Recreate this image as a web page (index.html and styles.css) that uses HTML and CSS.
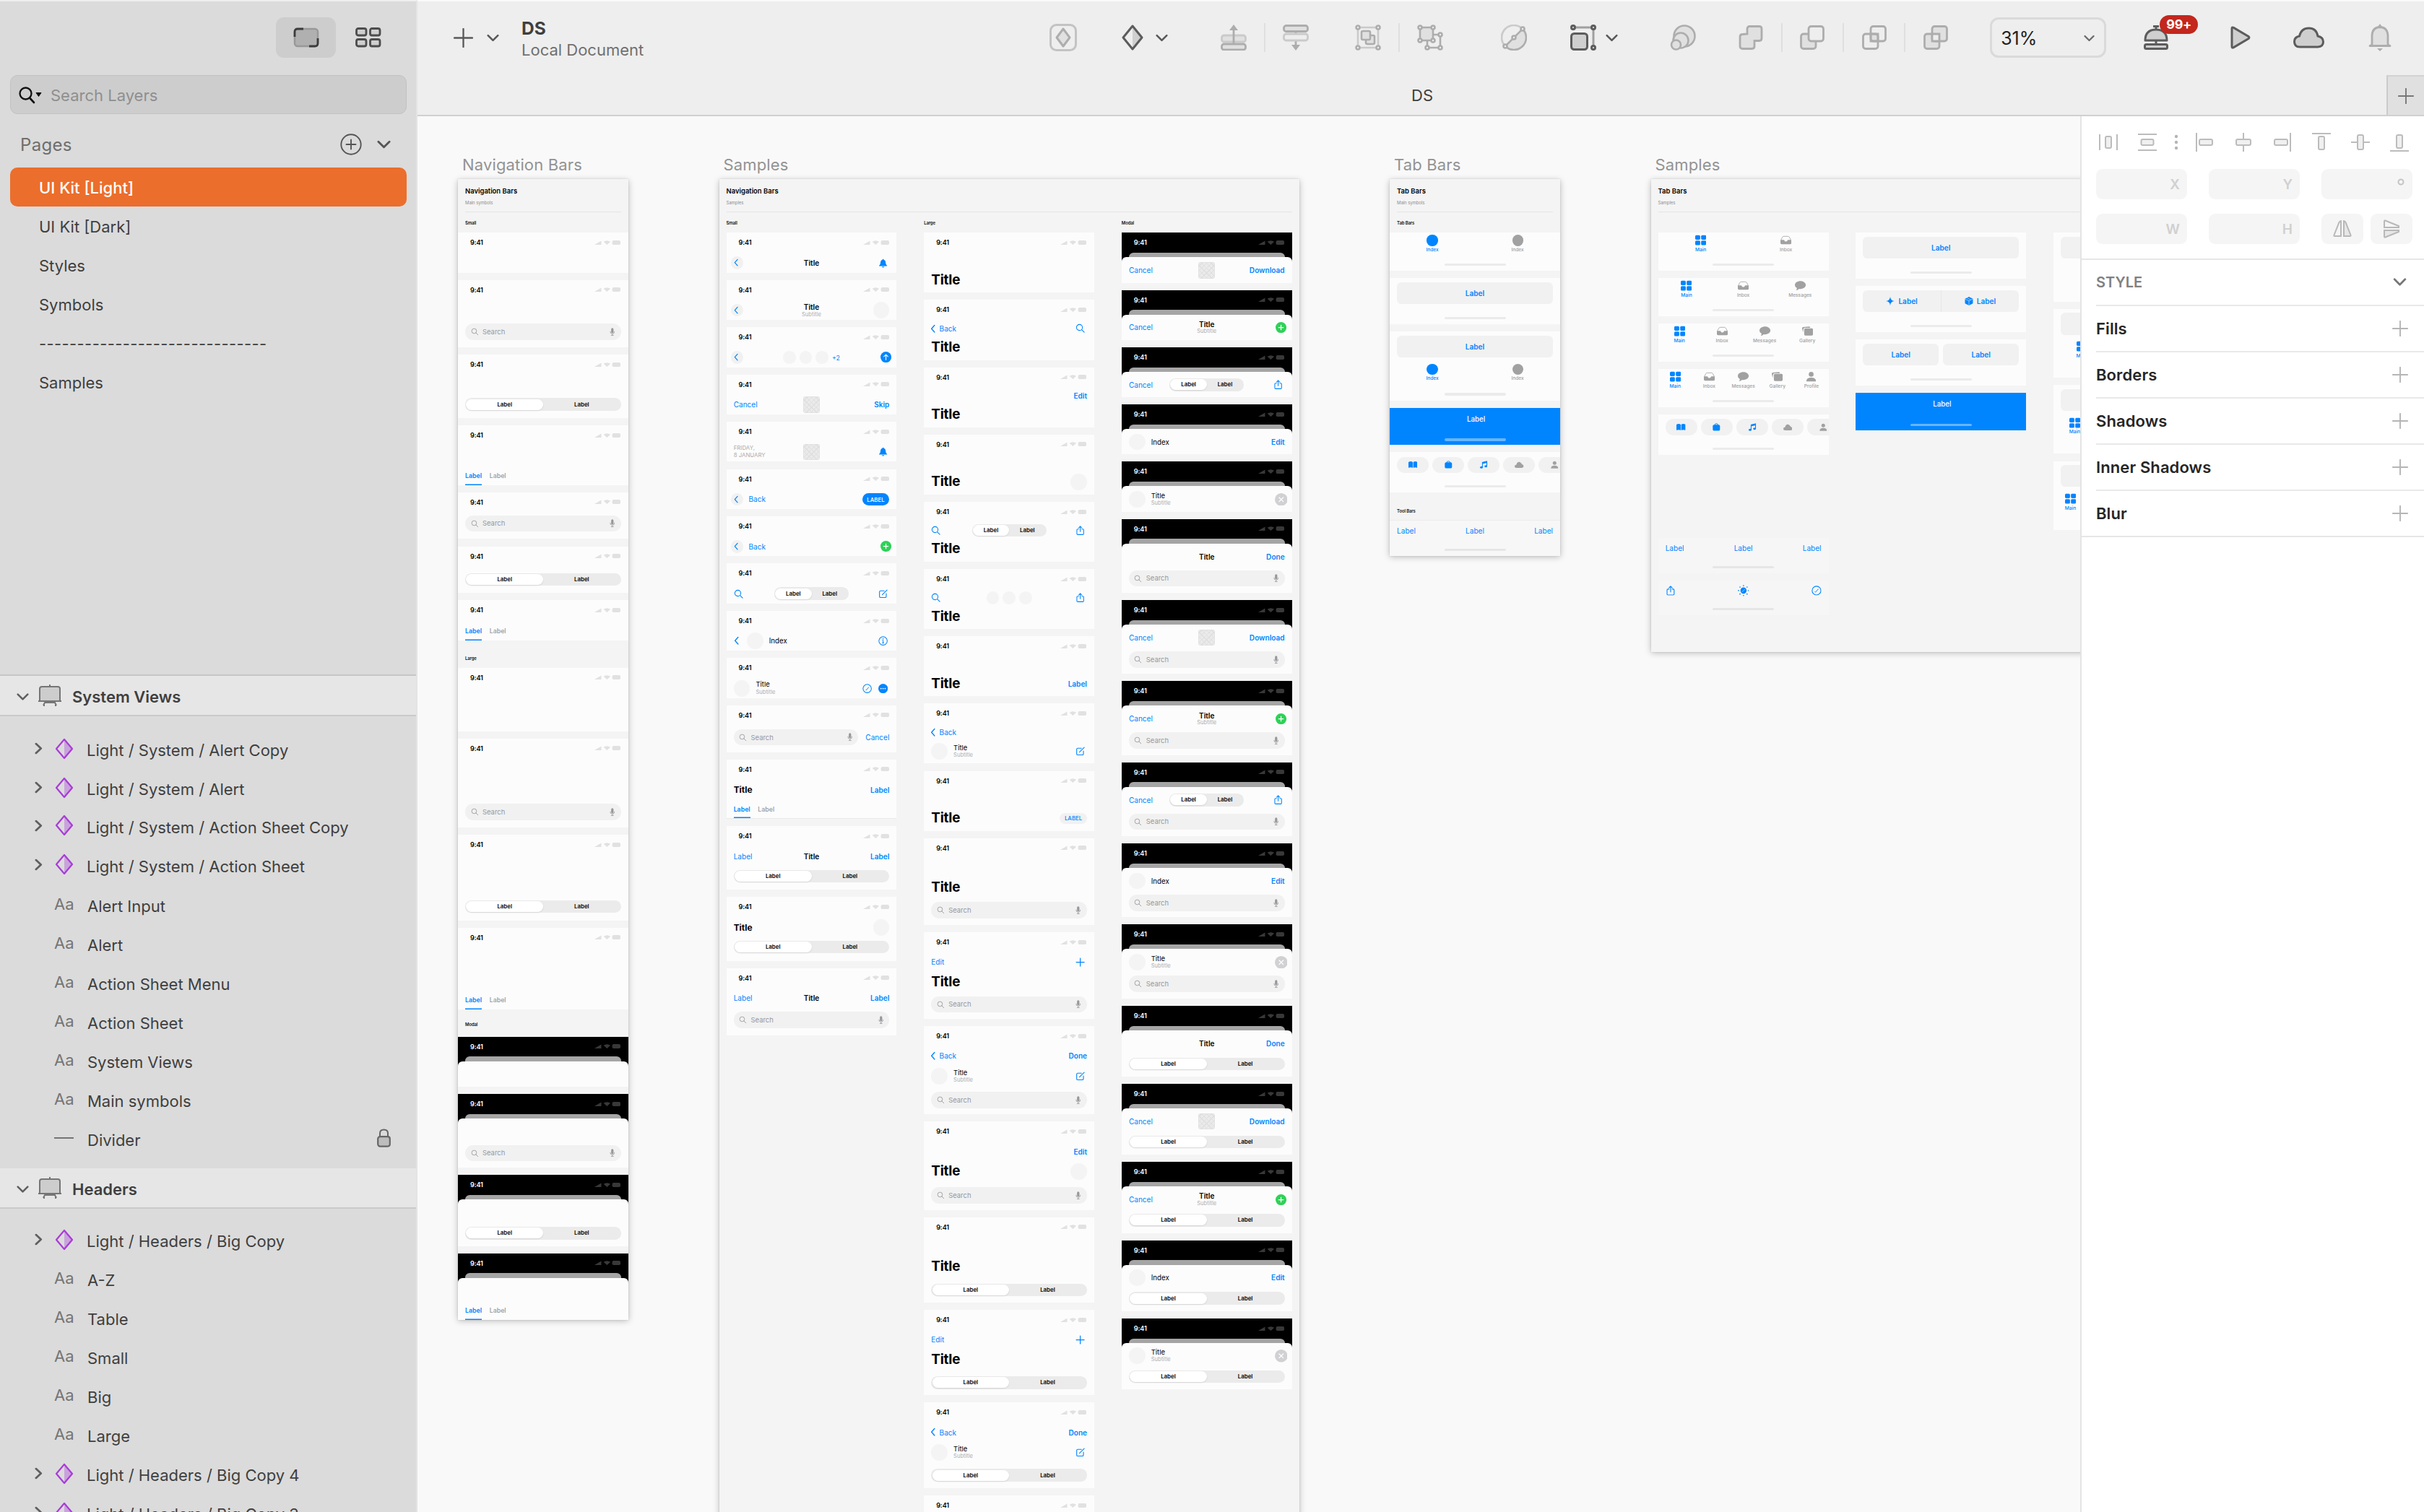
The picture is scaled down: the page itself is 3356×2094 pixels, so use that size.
FILE: index.html
```html
<!DOCTYPE html>
<html lang="en">
<head>
<meta charset="utf-8">
<title>DS</title>
<link rel="stylesheet" href="styles.css">
</head>
<body>
<svg class="defs" aria-hidden="true">
  <symbol id="chev" viewBox="0 0 20 12"><path d="M2 2l8 8 8-8" fill="none" stroke="currentColor" stroke-width="3" stroke-linecap="round" stroke-linejoin="round"/></symbol>
  <symbol id="chevr" viewBox="0 0 12 18"><path d="M2 2l7.500 7-7.500 7" fill="none" stroke="currentColor" stroke-width="3" stroke-linecap="round" stroke-linejoin="round"/></symbol>
  <symbol id="plusl" viewBox="0 0 28 28"><path d="M14 1v26M1 14h26" stroke="currentColor" stroke-width="2.400" stroke-linecap="round"/></symbol>
  <symbol id="sym" viewBox="0 0 26 30"><path d="M13 2l11 13-11 13z" fill="#c9a3dc"/><path d="M13 2l11 13-11 13L2 15z" fill="none" stroke="#a93bd8" stroke-width="2.200" stroke-linejoin="round"/></symbol>
  <symbol id="board" viewBox="0 0 34 30"><path d="M3 22V6q0-3 3-3h22q3 0 3 3v16z" fill="#cdcdcd"/><path d="M3 22V6q0-3 3-3h22q3 0 3 3v16M1 23h32M17 0v3M8 29l2-4h14l2 4M8 29h2M24 29h2" fill="none" stroke="#757575" stroke-width="2"/></symbol>
  <symbol id="back" viewBox="0 0 24 24"><path d="M15 3L7 12l8 9" fill="none" stroke="currentColor" stroke-width="2.600" stroke-linecap="round" stroke-linejoin="round"/></symbol>
  <symbol id="bell" viewBox="0 0 24 24"><path d="M12 1.500c1 0 1.600.7 1.700 1.500 3 .9 4.600 3.300 4.800 7 .2 4 1.200 5.800 3.500 7.500V19H2v-1.500C4.300 15.800 5.300 14 5.500 10c.2-3.700 1.800-6.100 4.800-7 .1-.8.700-1.500 1.700-1.500zM9 20.500h6c-.3 1.600-1.400 2.300-3 2.300s-2.700-.7-3-2.300z" fill="currentColor"/></symbol>
  <symbol id="up" viewBox="0 0 24 24"><circle cx="12" cy="12" r="12" fill="currentColor"/><path d="M12 18V6.500M7.500 11L12 6.500l4.500 4.500" fill="none" stroke="#fff" stroke-width="1.800" stroke-linecap="round" stroke-linejoin="round"/></symbol>
  <symbol id="addc" viewBox="0 0 24 24"><circle cx="12" cy="12" r="12" fill="#30d158"/><path d="M12 7v10M7 12h10" stroke="#fff" stroke-width="2" stroke-linecap="round"/></symbol>
  <symbol id="close" viewBox="0 0 28 28"><circle cx="14" cy="14" r="14" fill="#d1d1d4"/><path d="M9.500 9.500l9 9M18.500 9.500l-9 9" stroke="#fff" stroke-width="2" stroke-linecap="round"/></symbol>
  <symbol id="find" viewBox="0 0 24 24"><circle cx="10" cy="10" r="7.500" fill="none" stroke="currentColor" stroke-width="1.900"/><path d="M15.500 15.500L22 22" stroke="currentColor" stroke-width="2" stroke-linecap="round"/></symbol>
  <symbol id="edit" viewBox="0 0 24 24"><path d="M20 11v7q0 3-3 3H6q-3 0-3-3V7q0-3 3-3h9M22 2L10 14" fill="none" stroke="currentColor" stroke-width="2" stroke-linecap="round"/></symbol>
  <symbol id="info" viewBox="0 0 24 24"><circle cx="12" cy="12" r="10.500" fill="none" stroke="currentColor" stroke-width="1.900"/><path d="M10 10.500h2.200V17M9.500 17.200h5" fill="none" stroke="currentColor" stroke-width="1.800"/><circle cx="12" cy="7" r="1.500" fill="currentColor"/></symbol>
  <symbol id="okc" viewBox="0 0 24 24"><circle cx="12" cy="12" r="10.500" fill="none" stroke="currentColor" stroke-width="1.900"/><path d="M8 14.500l1.500 1.500 7-8" fill="none" stroke="currentColor" stroke-width="1.700"/></symbol>
  <symbol id="more" viewBox="0 0 24 24"><circle cx="12" cy="12" r="12" fill="currentColor"/><g fill="#fff"><circle cx="6.800" cy="12" r="1.700"/><circle cx="12" cy="12" r="1.700"/><circle cx="17.200" cy="12" r="1.700"/></g></symbol>
  <symbol id="share" viewBox="0 0 24 24"><path d="M8 8.500H5.500q-2 0-2 2V20.500q0 2 2 2h13q2 0 2-2V10.500q0-2-2-2H16M12 15V1.500M8 5.500l4-4 4 4" fill="none" stroke="currentColor" stroke-width="1.900" stroke-linecap="round" stroke-linejoin="round"/></symbol>
  <symbol id="add" viewBox="0 0 24 24"><path d="M12 2v20M2 12h20" stroke="currentColor" stroke-width="2.200" stroke-linecap="round"/></symbol>
  <symbol id="mic" viewBox="0 0 14 20"><rect x="4" y="0" width="6" height="13" rx="3" fill="currentColor"/><path d="M1.500 8.500q0 6.500 5.500 6.500t5.500-6.500M7 15v4M3.500 19h7" fill="none" stroke="currentColor" stroke-width="1.500"/></symbol>
  <symbol id="main" viewBox="0 0 24 24"><g fill="currentColor"><rect x="0" y="1" width="11" height="10" rx="2.500"/><rect x="13" y="1" width="11" height="10" rx="2.500"/><rect x="0" y="13" width="11" height="10" rx="2.500"/><rect x="13" y="13" width="11" height="10" rx="2.500"/></g></symbol>
  <symbol id="inbox" viewBox="0 0 26 22"><path d="M1 11L5 3.500Q6 2 8 2h10q2 0 3 1.500L25 11" fill="none" stroke="currentColor" stroke-width="1.400"/><path d="M0 10.500h8q1 0 1.400 1.500 1 2.500 3.600 2.500t3.600-2.500q.4-1.500 1.400-1.500h8V18q0 3-3 3H3q-3 0-3-3z" fill="currentColor"/></symbol>
  <symbol id="msg" viewBox="0 0 26 22"><path d="M13 0c7 0 13 4 13 9.500S20 19 13 19c-1 0-2-.1-3-.3Q7 22 3 22q2-2 1.700-5.300C1.700 15 0 12.500 0 9.500 0 4 6 0 13 0z" fill="currentColor"/></symbol>
  <symbol id="gal" viewBox="0 0 26 22"><path d="M2 14L0 4q0-2 2-2.500L17 0q2 0 2.500 3H7q-4 0-4 4z" fill="currentColor"/><rect x="5" y="4.500" width="21" height="17" rx="3" fill="currentColor"/></symbol>
  <symbol id="user" viewBox="0 0 24 24"><circle cx="12" cy="7" r="5.300" fill="currentColor"/><path d="M1.500 22q0-7.500 10.500-7.500T22.500 22q0 .8-1 .8h-19q-1 0-1-.8z" fill="currentColor"/></symbol>
  <symbol id="book" viewBox="0 0 24 18"><path d="M0 2q6-3.500 11.300 0v15Q6 14.500 0 17zM12.700 2Q18 -1.500 24 2v15q-6-2.500-11.300 0z" fill="currentColor"/></symbol>
  <symbol id="bag" viewBox="0 0 24 24"><rect x="1.500" y="5" width="21" height="17.500" rx="4" fill="currentColor"/><path d="M7 6q0-4.500 5-4.500T17 6" fill="none" stroke="currentColor" stroke-width="2"/></symbol>
  <symbol id="note" viewBox="0 0 24 24"><path d="M8 19V5l13-3v14" fill="none" stroke="currentColor" stroke-width="2.200"/><path d="M8 5l13-3v4.500L8 9.500z" fill="currentColor"/><ellipse cx="5" cy="19.500" rx="4" ry="3.300" fill="currentColor"/><ellipse cx="18" cy="16.500" rx="4" ry="3.300" fill="currentColor"/></symbol>
  <symbol id="cloud" viewBox="0 0 26 18"><path d="M6 18q-6 0-6-4.500Q0 9 5 8.500 6 2.500 11 1q5-1.500 8 4 2 .3 2.500 3 4.500.8 4.500 5t-5 5z" fill="currentColor"/></symbol>
  <symbol id="star" viewBox="0 0 24 24"><path d="M12 0q1 11 12 12-11 1-12 12-1-11-12-12Q11 11 12 0z" fill="currentColor"/></symbol>
  <symbol id="box" viewBox="0 0 24 24"><path d="M12 0l11 5.500v13L12 24 1 18.500v-13z" fill="currentColor"/><path d="M1 6l11 5.500L23 6M12 11.500V24M6.500 3.200l11 5.300" fill="none" stroke="#f1f1f1" stroke-width="1.200"/></symbol>
  <symbol id="sun" viewBox="0 0 24 24"><circle cx="12" cy="12" r="6.500" fill="currentColor"/><path d="M9 15l6-6" stroke="#f6f6f6" stroke-width="1"/><g fill="currentColor"><circle cx="12" cy="1.500" r="1.300"/><circle cx="12" cy="22.500" r="1.300"/><circle cx="1.500" cy="12" r="1.300"/><circle cx="22.500" cy="12" r="1.300"/><circle cx="4.600" cy="4.600" r="1.300"/><circle cx="19.400" cy="4.600" r="1.300"/><circle cx="4.600" cy="19.400" r="1.300"/><circle cx="19.400" cy="19.400" r="1.300"/></g></symbol>
</svg>

<div class="app">
<aside class="sidebar">
  <div class="modes">
    <button class="mode on"><svg width="36" height="28" viewBox="0 0 36 28"><rect x="2" y="2" width="32" height="24" rx="4" fill="#b0b0b0" stroke="#999" stroke-width="2.500"/><path d="M2 13V6q0-4 4-4h8M34 15v7q0 4-4 4h-8" fill="none" stroke="#3c3c3c" stroke-width="2.800"/></svg></button>
    <button class="mode"><svg width="36" height="28" viewBox="0 0 36 28"><g fill="#cfcfcf" stroke="#4c4c4c" stroke-width="2.800"><rect x="1.500" y="1.500" width="13.500" height="9.500" rx="2.500"/><rect x="20.500" y="1.500" width="13.500" height="9.500" rx="2.500"/><rect x="1.500" y="16.500" width="13.500" height="9.500" rx="2.500"/><rect x="20.500" y="16.500" width="13.500" height="9.500" rx="2.500"/></g></svg></button>
  </div>
  <div class="find"><svg width="32" height="24" viewBox="0 0 32 24"><circle cx="9.500" cy="9.500" r="8" fill="none" stroke="#111" stroke-width="2.300"/><path d="M15 15.500l6 6.500" stroke="#111" stroke-width="2.600" stroke-linecap="round"/><path d="M24 8.500h7l-3.500 5z" fill="#111" stroke="#111" stroke-linejoin="round"/></svg><span>Search Layers</span></div>
  <div class="pages-head"><span>Pages</span>
    <svg width="30" height="30" viewBox="0 0 30 30"><circle cx="15" cy="15" r="13.700" fill="none" stroke="#555" stroke-width="1.900"/><path d="M15 8.500v13M8.500 15h13" stroke="#555" stroke-width="1.900" stroke-linecap="round"/></svg>
    <svg class="pc" width="19" height="12"><use href="#chev"/></svg></div>
  <ul class="pages">
    <li class="on">UI Kit [Light]</li><li>UI Kit [Dark]</li><li>Styles</li><li>Symbols</li><li class="rule">------------------------------</li><li>Samples</li>
  </ul>
  <div class="layers">
    <h3><svg class="fold"><use href="#chev"/></svg><svg class="bi"><use href="#board"/></svg>System Views</h3>
    <ul class="first">
      <li><svg class="ex"><use href="#chevr"/></svg><svg class="sy"><use href="#sym"/></svg>Light / System / Alert Copy</li>
      <li><svg class="ex"><use href="#chevr"/></svg><svg class="sy"><use href="#sym"/></svg>Light / System / Alert</li>
      <li class="hi"><svg class="ex"><use href="#chevr"/></svg><svg class="sy"><use href="#sym"/></svg>Light / System / Action Sheet Copy</li>
      <li class="hi"><svg class="ex"><use href="#chevr"/></svg><svg class="sy"><use href="#sym"/></svg>Light / System / Action Sheet</li>
      <li><i>Aa</i>Alert Input</li>
      <li><i>Aa</i>Alert</li>
      <li><i>Aa</i>Action Sheet Menu</li>
      <li><i>Aa</i>Action Sheet</li>
      <li><i>Aa</i>System Views</li>
      <li><i>Aa</i>Main symbols</li>
      <li><i class="dash"></i>Divider<svg class="lock" viewBox="0 0 19 26"><rect x="1.200" y="11.200" width="16.600" height="13.400" rx="3" fill="#bdbdbd" stroke="#666" stroke-width="2.200"/><path d="M4 11V6.500q0-5 5.500-5T15 6.500V11" fill="none" stroke="#666" stroke-width="2"/></svg></li>
    </ul>
    <h3 class="second"><svg class="fold"><use href="#chev"/></svg><svg class="bi"><use href="#board"/></svg>Headers</h3>
    <ul>
      <li><svg class="ex"><use href="#chevr"/></svg><svg class="sy"><use href="#sym"/></svg>Light / Headers / Big Copy</li>
      <li><i>Aa</i>A-Z</li>
      <li><i>Aa</i>Table</li>
      <li><i>Aa</i>Small</li>
      <li><i>Aa</i>Big</li>
      <li><i>Aa</i>Large</li>
      <li><svg class="ex"><use href="#chevr"/></svg><svg class="sy"><use href="#sym"/></svg>Light / Headers / Big Copy 4</li>
      <li><svg class="ex"><use href="#chevr"/></svg><svg class="sy"><use href="#sym"/></svg>Light / Headers / Big Copy 3</li>
    </ul>
  </div>
</aside>

<main class="window">
<header class="toolbar">
  <div class="doc"><svg class="new"><use href="#plusl"/></svg><svg class="cv"><use href="#chev"/></svg><div><strong>DS</strong><span>Local Document</span></div></div>
  <div class="tools">
    <svg class="t38" viewBox="0 0 38 38"><rect x="1.500" y="1.500" width="35" height="35" rx="8" fill="none" stroke="#c3c3c3" stroke-width="3"/><path d="M19 7l9 12-9 12-9-12z" fill="#e0e0e0" stroke="#adadad" stroke-width="3" stroke-linejoin="round"/></svg>
    <div class="grp m62"><svg class="t30" viewBox="0 0 30 36"><path d="M15 2l13 16-13 16z" fill="#cfcfcf"/><path d="M15 2l13 16-13 16L2 18z" fill="none" stroke="#5c5c5c" stroke-width="3" stroke-linejoin="round"/></svg><svg class="cv"><use href="#chev"/></svg></div>
    <div class="pair m73"><svg class="t36" viewBox="0 0 36 36" fill="#e0e0e0" stroke-width="2.800"><rect x="1.500" y="15" width="33" height="9" rx="3" stroke="#cacaca"/><rect x="1.500" y="27" width="33" height="8" rx="3" stroke="#adadad"/><path d="M18 27V6" stroke="#adadad"/><path d="M18 0l6 8H12z" fill="#adadad"/></svg><hr><svg class="t36" viewBox="0 0 36 36" fill="#e0e0e0" stroke-width="2.800"><path d="M18 9v20" stroke="#adadad"/><rect x="1.500" y="1.500" width="33" height="8" rx="3" stroke="#adadad"/><rect x="1.500" y="13" width="33" height="9" rx="3" fill="#eee" stroke="#cacaca"/><path d="M18 36l6-8H12z" fill="#adadad"/></svg></div>
    <div class="pair m64"><svg class="t36" viewBox="0 0 36 36" fill="#e0e0e0" stroke="#adadad" stroke-width="2.600"><path d="M4 4h28v28H4z" fill="none" stroke="#cacaca"/><rect x="15" y="15" width="12" height="12" rx="2"/><rect x="9" y="9" width="12" height="12" rx="2"/><g fill="#eee"><circle cx="4" cy="4" r="2.500"/><circle cx="32" cy="4" r="2.500"/><circle cx="4" cy="32" r="2.500"/><circle cx="32" cy="32" r="2.500"/></g></svg><hr><svg class="t36" viewBox="0 0 36 36" fill="#e0e0e0" stroke="#adadad" stroke-width="2.600"><path d="M14 14h18v18H14z" fill="none"/><path d="M4 4h18v18H4z"/><g fill="#eee"><circle cx="4" cy="4" r="2.500"/><circle cx="22" cy="4" r="2.500"/><circle cx="4" cy="22" r="2.500"/><circle cx="22" cy="22" r="2.500"/><circle cx="32" cy="14" r="2.500"/><circle cx="14" cy="32" r="2.500"/><circle cx="32" cy="32" r="2.500"/></g></svg></div>
    <svg class="t36 m80" viewBox="0 0 36 36" fill="none" stroke="#adadad" stroke-width="2.600"><path d="M30 6A16.500 16.500 0 0 0 6 30" stroke="#cacaca"/><path d="M30 6A16.500 16.500 0 0 1 6 30z" fill="#e0e0e0"/><g fill="#eee"><circle cx="30" cy="6" r="2.500"/><circle cx="18" cy="18" r="2.500"/><circle cx="6" cy="30" r="2.500"/></g></svg>
    <div class="grp m60"><svg class="t36" viewBox="0 0 36 36" fill="#cfcfcf" stroke="#5c5c5c" stroke-width="3"><path d="M4 4h28v28" fill="none" stroke="#a0a0a0"/><rect x="1.500" y="12.500" width="22" height="22" rx="4"/><g fill="#eee"><circle cx="4" cy="4" r="2.500"/><circle cx="32" cy="4" r="2.500"/><circle cx="32" cy="32" r="2.500"/></g></svg><svg class="cv near"><use href="#chev"/></svg></div>
    <svg class="t36 m72" viewBox="0 0 36 36" fill="#e0e0e0" stroke="#adadad" stroke-width="2.600"><circle cx="20" cy="16" r="14.500"/><circle cx="15" cy="22" r="10.500"/><circle cx="8.500" cy="28" r="6.500"/></svg>
    <div class="quad m59"><svg class="t34" viewBox="0 0 34 34" fill="#e0e0e0" stroke="#adadad" stroke-width="2.800"><path d="M12 12V5q0-3.500 3.500-3.500h13q3.500 0 3.500 3.500v13q0 3.500-3.500 3.500H22V29q0 3.500-3.500 3.500h-13Q2 32.500 2 29V16q0-3.500 3.500-3.500z"/></svg><hr><svg class="t34" viewBox="0 0 34 34" fill="#e0e0e0" stroke="#adadad" stroke-width="2.800"><rect x="1.500" y="12" width="20.500" height="20.500" rx="3.500"/><rect x="12" y="1.500" width="20.500" height="20.500" rx="3.500" fill="#eee"/></svg><hr><svg class="t34" viewBox="0 0 34 34" fill="none" stroke="#adadad" stroke-width="2.800"><path d="M12 12h10v10H12z" fill="#e0e0e0"/><rect x="1.500" y="12" width="20.500" height="20.500" rx="3.500"/><rect x="12" y="1.500" width="20.500" height="20.500" rx="3.500"/></svg><hr><svg class="t34" viewBox="0 0 34 34" fill="#e0e0e0" stroke="#adadad" stroke-width="2.800"><rect x="1.500" y="12" width="20.500" height="20.500" rx="3.500"/><rect x="12" y="1.500" width="20.500" height="20.500" rx="3.500"/><path d="M12 12h10v10H12z" fill="#eee"/></svg></div>
    <div class="zoom">31%<svg class="zc"><use href="#chev"/></svg></div>
    <div class="notify"><svg width="34" height="34" viewBox="0 0 34 34" fill="#cfcfcf" stroke="#5c5c5c" stroke-width="3"><path d="M2 21q0-15 15-15t15 15z" stroke-linejoin="round"/><rect x="1.500" y="26.500" width="31" height="6" rx="2"/><path d="M17 21v5M17 1v4M13 1.500h8" /></svg><b>99+</b></div>
    <svg class="m86" width="28" height="32" viewBox="0 0 28 32"><path d="M2 3.500Q2 1 4.500 2.400L25 14.500q1.800 1.500 0 3L4.500 29.600Q2 31 2 28.500z" fill="#cfcfcf" stroke="#5c5c5c" stroke-width="3"/></svg>
    <svg class="m59" width="43" height="30" viewBox="0 0 43 30"><path d="M9 28q-7.500 0-7.500-7.500 0-6 7-7.500Q11 2 21.500 2T34 13q7.500 1.500 7.500 8T34 28z" fill="#cfcfcf" stroke="#5c5c5c" stroke-width="3"/></svg>
    <svg class="m61" width="32" height="38" viewBox="0 0 32 38"><path d="M5 29V16Q5.500 5 16 4.500 26.500 5 27 16v13l3 1.500H2z" fill="#e0e0e0" stroke="#adadad" stroke-width="2.800" stroke-linejoin="round"/><path d="M12 34h8l-4 4zM13 4l3-4 3 4z" fill="#adadad"/></svg>
  </div>
</header>
<div class="tabs-row"><span>DS</span><button class="newtab"><svg width="22" height="22"><use href="#plusl"/></svg></button></div>

<div class="stage">
<div class="canvas">

<section class="board b1"><h2>Navigation Bars</h2>
<div class="art w375">
  <div class="ah"><strong>Navigation Bars</strong><small>Main symbols</small></div>
  <h4>Small</h4>
  <div class="col">
    <div class="card"><p class="st">9:41</p></div>
    <div class="card h148"><p class="st">9:41</p><div class="search"><svg><use href="#find"/></svg>Search<svg class="mic"><use href="#mic"/></svg></div></div>
    <div class="card h140"><p class="st">9:41</p><div class="seg"><b>Label</b><b>Label</b></div></div>
    <div class="card h131"><p class="st">9:41</p><div class="tabs"><b>Label</b><span>Label</span></div></div>
    <div class="card h103"><p class="st">9:41</p><div class="search"><svg><use href="#find"/></svg>Search<svg class="mic"><use href="#mic"/></svg></div></div>
    <div class="card h103"><p class="st">9:41</p><div class="seg"><b>Label</b><b>Label</b></div></div>
    <div class="card"><p class="st">9:41</p><div class="tabs"><b>Label</b><span>Label</span></div></div>
  </div>
  <h4 class="large">Large</h4>
  <div class="col">
    <div class="card h140"><p class="st">9:41</p></div>
    <div class="card h196"><p class="st">9:41</p><div class="search"><svg><use href="#find"/></svg>Search<svg class="mic"><use href="#mic"/></svg></div></div>
    <div class="card h188"><p class="st">9:41</p><div class="seg"><b>Label</b><b>Label</b></div></div>
    <div class="card h180"><p class="st">9:41</p><div class="tabs"><b>Label</b><span>Label</span></div></div>
  </div>
  <h4 class="modal-h">Modal</h4>
  <div class="col">
    <div class="card modal"><p class="st">9:41</p><div class="sheet"></div></div>
    <div class="card modal h162"><p class="st">9:41</p><div class="sheet"><div class="search"><svg><use href="#find"/></svg>Search<svg class="mic"><use href="#mic"/></svg></div></div></div>
    <div class="card modal h156"><p class="st">9:41</p><div class="sheet"><div class="seg"><b>Label</b><b>Label</b></div></div></div>
    <div class="card modal h147"><p class="st">9:41</p><div class="sheet"><div class="tabs"><b>Label</b><span>Label</span></div></div></div>
  </div>
</div></section>

<section class="board b2"><h2>Samples</h2>
<div class="art w1276">
  <div class="ah"><strong>Navigation Bars</strong><small>Samples</small></div>
  <div class="cols">
  <div class="stack"><h4>Small</h4><div class="col">
    <div class="card"><p class="st">9:41</p><div class="nav"><span class="l"><i class="bk"><svg><use href="#back"/></svg></i></span><b>Title</b><span class="r"><svg class="in"><use href="#bell"/></svg></span></div></div>
    <div class="card"><p class="st">9:41</p><div class="nav"><span class="l"><i class="bk"><svg><use href="#back"/></svg></i></span><div class="tt"><b>Title</b><small>Subtitle</small></div><span class="r"><i class="av"></i></span></div></div>
    <div class="card"><p class="st">9:41</p><div class="nav"><span class="l"><i class="bk"><svg><use href="#back"/></svg></i></span><div class="dots"><i></i><i></i><i></i><span>+2</span></div><span class="r"><svg class="big"><use href="#up"/></svg></span></div></div>
    <div class="card"><p class="st">9:41</p><div class="nav"><span class="l">Cancel</span><i class="pat"></i><span class="r"><b>Skip</b></span></div></div>
    <div class="card"><p class="st">9:41</p><div class="nav"><span class="l date">FRIDAY,<br>8 JANUARY</span><i class="pat"></i><span class="r"><svg class="in"><use href="#bell"/></svg></span></div></div>
    <div class="card"><p class="st">9:41</p><div class="nav"><span class="l"><i class="bk"><svg><use href="#back"/></svg></i>Back</span><span class="r"><em class="pill">LABEL</em></span></div></div>
    <div class="card"><p class="st">9:41</p><div class="nav"><span class="l"><i class="bk"><svg><use href="#back"/></svg></i>Back</span><span class="r"><svg class="big"><use href="#addc"/></svg></span></div></div>
    <div class="card"><p class="st">9:41</p><div class="nav"><span class="l"><svg><use href="#find"/></svg></span><div class="seg sm"><b>Label</b><b>Label</b></div><span class="r"><svg class="in"><use href="#edit"/></svg></span></div></div>
    <div class="card"><p class="st">9:41</p><div class="nav"><span class="l"><svg class="ch"><use href="#back"/></svg><i class="av"></i><span class="ix">Index</span></span><span class="r"><svg class="in"><use href="#info"/></svg></span></div></div>
    <div class="card"><p class="st">9:41</p><div class="nav"><span class="l"><i class="av"></i><span class="ts">Title<small>Subtitle</small></span></span><span class="r"><svg><use href="#okc"/></svg><svg class="in"><use href="#more"/></svg></span></div></div>
    <div class="card h103"><p class="st">9:41</p><div class="nav down"><div class="search"><svg><use href="#find"/></svg>Search<svg class="mic"><use href="#mic"/></svg></div><span>Cancel</span></div></div>
    <div class="card h131"><p class="st">9:41</p><div class="nav"><span class="l"><b class="t20">Title</b></span><span class="r"><b>Label</b></span></div><div class="tabs line"><b>Label</b><span>Label</span></div></div>
    <div class="card h140"><p class="st">9:41</p><div class="nav"><span class="l">Label</span><b>Title</b><span class="r"><b>Label</b></span></div><div class="seg"><b>Label</b><b>Label</b></div></div>
    <div class="card h140"><p class="st">9:41</p><div class="nav"><span class="l"><b class="t20">Title</b></span><span class="r"><i class="av"></i></span></div><div class="seg"><b>Label</b><b>Label</b></div></div>
    <div class="card h148"><p class="st">9:41</p><div class="nav"><span class="l">Label</span><b>Title</b><span class="r"><b>Label</b></span></div><div class="search"><svg><use href="#find"/></svg>Search<svg class="mic"><use href="#mic"/></svg></div></div>
  </div></div>

  <div class="stack"><h4>Large</h4><div class="col">
    <div class="card lg"><p class="st">9:41</p><div class="nav"></div><div class="big-t"><b>Title</b></div></div>
    <div class="card lg"><p class="st">9:41</p><div class="nav"><span class="l"><svg class="bb"><use href="#back"/></svg>Back</span><span class="r"><svg class="in"><use href="#find"/></svg></span></div><div class="big-t"><b>Title</b></div></div>
    <div class="card lg"><p class="st">9:41</p><div class="nav"><span class="r"><b>Edit</b></span></div><div class="big-t"><b>Title</b></div></div>
    <div class="card lg"><p class="st">9:41</p><div class="nav"></div><div class="big-t"><b>Title</b><i class="av"></i></div></div>
    <div class="card lg"><p class="st">9:41</p><div class="nav"><span class="l"><svg><use href="#find"/></svg></span><div class="seg sm"><b>Label</b><b>Label</b></div><span class="r"><svg class="in"><use href="#share"/></svg></span></div><div class="big-t"><b>Title</b></div></div>
    <div class="card lg"><p class="st">9:41</p><div class="nav"><span class="l"><svg><use href="#find"/></svg></span><div class="dots"><i></i><i></i><i></i></div><span class="r"><svg class="in"><use href="#share"/></svg></span></div><div class="big-t"><b>Title</b></div></div>
    <div class="card lg"><p class="st">9:41</p><div class="nav"></div><div class="big-t"><b>Title</b><span class="lk">Label</span></div></div>
    <div class="card lg"><p class="st">9:41</p><div class="nav"><span class="l"><svg class="bb"><use href="#back"/></svg>Back</span></div><div class="big-t"><i class="av"></i><span class="ts">Title<small>Subtitle</small></span><svg class="in"><use href="#edit"/></svg></div></div>
    <div class="card lg"><p class="st">9:41</p><div class="nav"></div><div class="big-t"><b>Title</b><em class="pill soft">LABEL</em></div></div>
    <div class="card xl"><p class="st">9:41</p><div class="nav"></div><div class="big-t"><b>Title</b></div><div class="search"><svg><use href="#find"/></svg>Search<svg class="mic"><use href="#mic"/></svg></div></div>
    <div class="card xl"><p class="st">9:41</p><div class="nav"><span class="l">Edit</span><span class="r"><svg class="in"><use href="#add"/></svg></span></div><div class="big-t"><b>Title</b></div><div class="search"><svg><use href="#find"/></svg>Search<svg class="mic"><use href="#mic"/></svg></div></div>
    <div class="card xl more"><p class="st">9:41</p><div class="nav"><span class="l"><svg class="bb"><use href="#back"/></svg>Back</span><span class="r"><b>Done</b></span></div><div class="big-t"><i class="av"></i><span class="ts">Title<small>Subtitle</small></span><svg class="in"><use href="#edit"/></svg></div><div class="search"><svg><use href="#find"/></svg>Search<svg class="mic"><use href="#mic"/></svg></div></div>
    <div class="card xl more"><p class="st">9:41</p><div class="nav"><span class="r"><b>Edit</b></span></div><div class="big-t"><b>Title</b><i class="av"></i></div><div class="search"><svg><use href="#find"/></svg>Search<svg class="mic"><use href="#mic"/></svg></div></div>
    <div class="card xl sg"><p class="st">9:41</p><div class="nav"></div><div class="big-t"><b>Title</b></div><div class="seg"><b>Label</b><b>Label</b></div></div>
    <div class="card xl sg"><p class="st">9:41</p><div class="nav"><span class="l">Edit</span><span class="r"><svg class="in"><use href="#add"/></svg></span></div><div class="big-t"><b>Title</b></div><div class="seg"><b>Label</b><b>Label</b></div></div>
    <div class="card xl sg"><p class="st">9:41</p><div class="nav"><span class="l"><svg class="bb"><use href="#back"/></svg>Back</span><span class="r"><b>Done</b></span></div><div class="big-t"><i class="av"></i><span class="ts">Title<small>Subtitle</small></span><svg class="in"><use href="#edit"/></svg></div><div class="seg"><b>Label</b><b>Label</b></div></div>
    <div class="card xl sg"><p class="st">9:41</p></div>
  </div></div>

  <div class="stack"><h4>Modal</h4><div class="col">
    <div class="card modal"><p class="st">9:41</p><div class="sheet"><div class="nav"><span class="l">Cancel</span><i class="pat"></i><span class="r"><b>Download</b></span></div></div></div>
    <div class="card modal"><p class="st">9:41</p><div class="sheet"><div class="nav"><span class="l">Cancel</span><div class="tt"><b>Title</b><small>Subtitle</small></div><span class="r"><svg class="big"><use href="#addc"/></svg></span></div></div></div>
    <div class="card modal"><p class="st">9:41</p><div class="sheet"><div class="nav"><span class="l">Cancel</span><div class="seg sm"><b>Label</b><b>Label</b></div><span class="r"><svg class="in"><use href="#share"/></svg></span></div></div></div>
    <div class="card modal"><p class="st">9:41</p><div class="sheet"><div class="nav"><span class="l"><i class="av"></i><span class="ix">Index</span></span><span class="r"><b>Edit</b></span></div></div></div>
    <div class="card modal"><p class="st">9:41</p><div class="sheet"><div class="nav"><span class="l"><i class="av"></i><span class="ts">Title<small>Subtitle</small></span></span><span class="r"><svg class="xx"><use href="#close"/></svg></span></div></div></div>
    <div class="card modal h162"><p class="st">9:41</p><div class="sheet"><div class="nav"><span class="l"></span><b>Title</b><span class="r"><b>Done</b></span></div><div class="search"><svg><use href="#find"/></svg>Search<svg class="mic"><use href="#mic"/></svg></div></div></div>
    <div class="card modal h162"><p class="st">9:41</p><div class="sheet"><div class="nav"><span class="l">Cancel</span><i class="pat"></i><span class="r"><b>Download</b></span></div><div class="search"><svg><use href="#find"/></svg>Search<svg class="mic"><use href="#mic"/></svg></div></div></div>
    <div class="card modal h162"><p class="st">9:41</p><div class="sheet"><div class="nav"><span class="l">Cancel</span><div class="tt"><b>Title</b><small>Subtitle</small></div><span class="r"><svg class="big"><use href="#addc"/></svg></span></div><div class="search"><svg><use href="#find"/></svg>Search<svg class="mic"><use href="#mic"/></svg></div></div></div>
    <div class="card modal h162"><p class="st">9:41</p><div class="sheet"><div class="nav"><span class="l">Cancel</span><div class="seg sm"><b>Label</b><b>Label</b></div><span class="r"><svg class="in"><use href="#share"/></svg></span></div><div class="search"><svg><use href="#find"/></svg>Search<svg class="mic"><use href="#mic"/></svg></div></div></div>
    <div class="card modal h162"><p class="st">9:41</p><div class="sheet"><div class="nav"><span class="l"><i class="av"></i><span class="ix">Index</span></span><span class="r"><b>Edit</b></span></div><div class="search"><svg><use href="#find"/></svg>Search<svg class="mic"><use href="#mic"/></svg></div></div></div>
    <div class="card modal h162"><p class="st">9:41</p><div class="sheet"><div class="nav"><span class="l"><i class="av"></i><span class="ts">Title<small>Subtitle</small></span></span><span class="r"><svg class="xx"><use href="#close"/></svg></span></div><div class="search"><svg><use href="#find"/></svg>Search<svg class="mic"><use href="#mic"/></svg></div></div></div>
    <div class="card modal h156"><p class="st">9:41</p><div class="sheet"><div class="nav"><span class="l"></span><b>Title</b><span class="r"><b>Done</b></span></div><div class="seg"><b>Label</b><b>Label</b></div></div></div>
    <div class="card modal h156"><p class="st">9:41</p><div class="sheet"><div class="nav"><span class="l">Cancel</span><i class="pat"></i><span class="r"><b>Download</b></span></div><div class="seg"><b>Label</b><b>Label</b></div></div></div>
    <div class="card modal h156"><p class="st">9:41</p><div class="sheet"><div class="nav"><span class="l">Cancel</span><div class="tt"><b>Title</b><small>Subtitle</small></div><span class="r"><svg class="big"><use href="#addc"/></svg></span></div><div class="seg"><b>Label</b><b>Label</b></div></div></div>
    <div class="card modal h156"><p class="st">9:41</p><div class="sheet"><div class="nav"><span class="l"><i class="av"></i><span class="ix">Index</span></span><span class="r"><b>Edit</b></span></div><div class="seg"><b>Label</b><b>Label</b></div></div></div>
    <div class="card modal h156"><p class="st">9:41</p><div class="sheet"><div class="nav"><span class="l"><i class="av"></i><span class="ts">Title<small>Subtitle</small></span></span><span class="r"><svg class="xx"><use href="#close"/></svg></span></div><div class="seg"><b>Label</b><b>Label</b></div></div></div>
  </div></div>
  </div>
</div></section>

<section class="board b3"><h2>Tab Bars</h2>
<div class="art w375">
  <div class="ah"><strong>Tab Bars</strong><small>Main symbols</small></div>
  <h4>Tab Bars</h4>
  <div class="col">
    <div class="bar"><div class="tb"><span class="on"><i></i>Index</span><span><i></i>Index</span></div></div>
    <div class="bar b102"><div class="btns"><b>Label</b></div></div>
    <div class="bar b151"><div class="btns"><b>Label</b></div><div class="tb"><span class="on"><i></i>Index</span><span><i></i>Index</span></div></div>
    <div class="bar blue">Label</div>
    <div class="bar b89"><div class="chips"><i class="on"><svg><use href="#book"/></svg></i><i class="on"><svg><use href="#bag"/></svg></i><i class="on"><svg><use href="#note"/></svg></i><i><svg><use href="#cloud"/></svg></i><i><svg><use href="#user"/></svg></i></div></div>
  </div>
  <h4 class="tool-h">Tool Bars</h4>
  <div class="bar flat"><div class="tools3"><span>Label</span><span>Label</span><span>Label</span></div></div>
</div></section>

<section class="board b4"><h2>Samples</h2>
<div class="art w1276 short">
  <div class="ah"><strong>Tab Bars</strong><small>Samples</small></div>
  <div class="cols bare">
  <div class="stack"><div class="col">
    <div class="bar"><div class="tb"><span class="on"><svg><use href="#main"/></svg>Main</span><span><svg><use href="#inbox"/></svg>Inbox</span></div></div>
    <div class="bar"><div class="tb"><span class="on"><svg><use href="#main"/></svg>Main</span><span><svg><use href="#inbox"/></svg>Inbox</span><span><svg><use href="#msg"/></svg>Messages</span></div></div>
    <div class="bar"><div class="tb"><span class="on"><svg><use href="#main"/></svg>Main</span><span><svg><use href="#inbox"/></svg>Inbox</span><span><svg><use href="#msg"/></svg>Messages</span><span><svg><use href="#gal"/></svg>Gallery</span></div></div>
    <div class="bar"><div class="tb"><span class="on"><svg><use href="#main"/></svg>Main</span><span><svg><use href="#inbox"/></svg>Inbox</span><span><svg><use href="#msg"/></svg>Messages</span><span><svg><use href="#gal"/></svg>Gallery</span><span><svg><use href="#user"/></svg>Profile</span></div></div>
    <div class="bar b89"><div class="chips"><i class="on"><svg><use href="#book"/></svg></i><i class="on"><svg><use href="#bag"/></svg></i><i class="on"><svg><use href="#note"/></svg></i><i><svg><use href="#cloud"/></svg></i><i><svg><use href="#user"/></svg></i></div></div>
    <div class="bar flat first"><div class="tools3"><span>Label</span><span>Label</span><span>Label</span></div></div>
    <div class="bar flat"><div class="tools3"><svg><use href="#share"/></svg><svg class="sun"><use href="#sun"/></svg><svg><use href="#okc"/></svg></div></div>
  </div></div>
  <div class="stack"><div class="col">
    <div class="bar b102"><div class="btns"><b>Label</b></div></div>
    <div class="bar b102"><div class="btns joined"><b><svg><use href="#star"/></svg>Label</b><b><svg><use href="#box"/></svg>Label</b></div></div>
    <div class="bar b102"><div class="btns"><b>Label</b><b>Label</b></div></div>
    <div class="bar blue">Label</div>
  </div></div>
  <div class="stack"><div class="col">
    <div class="bar b151"><div class="btns"><b></b></div></div>
    <div class="bar b151"><div class="btns"><b></b></div><div class="tb"><span class="on"><svg><use href="#main"/></svg>Main</span><span></span><span></span></div></div>
    <div class="bar b151"><div class="btns"><b></b></div><div class="tb"><span class="on"><svg><use href="#main"/></svg>Main</span><span></span><span></span><span></span></div></div>
    <div class="bar b151"><div class="btns"><b></b></div><div class="tb"><span class="on"><svg><use href="#main"/></svg>Main</span><span></span><span></span><span></span><span></span></div></div>
  </div></div>
  </div>
</div></section>
</div>

<aside class="inspector">
  <div class="align">
    <svg viewBox="0 0 26 26"><path d="M1 2v22M25 2v22"/><rect x="9" y="5" width="8" height="16" rx="2"/></svg>
    <svg viewBox="0 0 26 26"><path d="M0 2h26M0 24h26"/><rect x="4.500" y="9" width="17" height="8" rx="2"/></svg>
    <svg class="dots3" viewBox="0 0 6 26"><g fill="#b5b5b5" stroke="none"><circle cx="3" cy="5" r="2.200"/><circle cx="3" cy="13" r="2.200"/><circle cx="3" cy="21" r="2.200"/></g></svg>
    <svg viewBox="0 0 26 26"><path d="M2 0v26"/><rect x="6" y="9" width="18" height="8" rx="2"/></svg>
    <svg viewBox="0 0 26 26"><path d="M13 0v26"/><rect x="3" y="9" width="20" height="8" rx="2"/></svg>
    <svg viewBox="0 0 26 26"><path d="M24 0v26"/><rect x="2" y="9" width="18" height="8" rx="2"/></svg>
    <svg viewBox="0 0 26 26"><path d="M0 1h26"/><rect x="9" y="5" width="8" height="18" rx="2"/></svg>
    <svg viewBox="0 0 26 26"><path d="M0 13h26"/><rect x="9" y="3" width="8" height="20" rx="2"/></svg>
    <svg viewBox="0 0 26 26"><path d="M0 25h26"/><rect x="9" y="3" width="8" height="18" rx="2"/></svg>
  </div>
  <div class="fields">
    <span>X</span><span>Y</span><span class="deg"><svg width="10" height="10" viewBox="0 0 10 10"><circle cx="5" cy="5" r="3.500" fill="none" stroke="#c4c4c4" stroke-width="2"/></svg></span>
    <span>W</span><span>H</span>
    <div><span class="flip"><svg width="26" height="24" viewBox="0 0 26 24"><path d="M11 1v21H2.500q-1.500 0-1-1.500L8.500 3Q9.500 1 11 1z" fill="none"/><path d="M15 1v21h8.500q1.500 0 1-1.500L17.500 3Q16.500 1 15 1z"/></svg></span><span class="flip"><svg width="24" height="26" viewBox="0 0 24 26"><path d="M2 11V2.500Q2 1 3.500 1.500L22 9v2z" fill="none"/><path d="M2 15v8.500Q2 25 3.500 24.500L22 17v-2z"/></svg></span></div>
  </div>
  <div class="style-h">STYLE<svg class="sc"><use href="#chev"/></svg></div>
  <div class="prop">Fills<svg><use href="#plusl"/></svg></div>
  <div class="prop">Borders<svg><use href="#plusl"/></svg></div>
  <div class="prop">Shadows<svg><use href="#plusl"/></svg></div>
  <div class="prop">Inner Shadows<svg><use href="#plusl"/></svg></div>
  <div class="prop last">Blur<svg><use href="#plusl"/></svg></div>
</aside>
</div>
</main>
</div>
</body>
</html>
```
FILE: styles.css
```css
* { box-sizing: border-box; }
body { margin: 0; font: 22px Inter, "Liberation Sans", sans-serif; color: #3f3f3f; background: #f9f9f9; overflow: hidden; }
h2, h3, h4, p, ul { margin: 0; padding: 0; font-weight: 400; }
ul { list-style: none; }
i, em { font-style: normal; }
button { border: 0; background: none; padding: 0; }
svg { flex: none; display: block; }
.defs { width: 0; height: 0; position: absolute; }

.app { display: grid; grid-template-columns: 578px 1fr; width: 3356px; height: 2094px; overflow: hidden; }

/* Sidebar */
.sidebar { background: #dbdbdb; border-right: 2px solid #e4e4e4; border-top: 2px solid #eee; height: 2094px; overflow: hidden; }
.modes { display: flex; justify-content: flex-end; align-items: center; gap: 3px; padding: 22px 25px 0 0; }
.mode { width: 83px; height: 56px; border-radius: 11px; display: grid; place-items: center; }
.mode.on { background: #cdcdcd; }
.find { margin: 24px 13px 0 14px; height: 54px; border: 1px solid #c2c2c2; border-radius: 10px; background: #cdcdcd; display: flex; align-items: center; gap: 12px; padding-left: 11px; color: #8f8f8f; }
.find svg { margin-top: 2px; }
.find span { padding-top: 1px; }
.pages-head { display: flex; align-items: center; height: 74px; padding: 10px 35px 0 28px; font-size: 24px; letter-spacing: .3px; color: #6e6e6e; }
.pages-head span { flex: 1; }
.pc { margin-left: 21px; color: #555; }
.pages { padding: 0 13px 0 14px; height: 702px; }
.pages li { height: 54px; line-height: 56px; padding-left: 40px; border-radius: 10px; }
.pages .on { background: #eb6e2c; color: #fff; font-weight: 500; }
.pages .rule { letter-spacing: .4px; }
.layers h3 { height: 58px; background: #e6e6e6; border-top: 2px solid #c6c6c6; border-bottom: 2px solid #cacaca; display: flex; align-items: center; font-weight: 600; font-size: 22px; padding: 3px 0 0 23px; }
.layers h3.second { border-top: 0; height: 56px; }
.fold { width: 17px; height: 12px; color: #5f5f5f; }
.bi { width: 34px; height: 30px; margin: -4px 14px 0 12px; }
.layers ul { padding: 18px 0 12px; }
.layers ul.first { padding-top: 20px; }
.layers li { height: 54px; line-height: 58px; padding: 0 35px 0 48px; display: flex; align-items: center; }
.layers li.hi { padding-bottom: 3px; }
.ex { width: 11px; height: 17px; color: #5f5f5f; margin: -5px 17px 0 0; }
.sy { width: 26px; height: 30px; margin: -5px 18px 0 0; }
.layers li > i { width: 27px; margin: -7px 19px 0 27px; color: #757575; font-size: 22px; }
.layers .dash { height: 2px; background: #757575; }
.lock { width: 19px; height: 26px; margin: -6px 0 0 auto; }

/* Toolbar */
.window { display: flex; flex-direction: column; min-width: 0; border-top: 2px solid #fafafa; height: 2094px; }
.toolbar { height: 102px; background: #eee; display: flex; align-items: flex-start; flex: none; }
.doc { width: 875px; padding: 20px 0 0 50px; display: flex; align-items: flex-start; }
.new { width: 27px; height: 27px; margin: 17px 19px 0 0; color: #585858; }
.cv { width: 17px; height: 11px; color: #585858; margin-left: 17px; }
.doc .cv { margin: 25px 31px 0 0; }
.cv.near { margin-left: 13px; }
.doc strong { display: block; font: 700 24.500px/34px Inter, sans-serif; }
.doc span { display: block; line-height: 26px; color: #707070; }
.tools { display: flex; align-items: center; height: 100px; }
.grp, .pair, .quad { display: flex; align-items: center; }
.tools hr { width: 2px; height: 40px; border: 0; background: #dfdfdf; margin: 0 24px; }
.tools .quad hr { margin: 0 24.700px; }
.t38 { width: 38px; height: 38px; } .t36 { width: 36px; height: 36px; } .t34 { width: 34px; height: 34px; } .t30 { width: 30px; height: 36px; }
.m62 { margin-left: 62px; } .m73 { margin-left: 73px; } .m64 { margin-left: 64px; } .m80 { margin-left: 80px; } .m60 { margin-left: 60px; } .m72 { margin-left: 72px; } .m59 { margin-left: 59px; } .m86 { margin-left: 86px; } .m61 { margin-left: 61px; }
.zoom { margin-left: 58px; width: 161px; height: 56px; border: 3px solid #dadada; border-radius: 12px; display: flex; align-items: center; justify-content: space-between; padding: 1px 13px 0 12px; font-size: 25px; color: #222; }
.zc { width: 15px; height: 10px; color: #6a6a6a; }
.notify { margin-left: 52px; position: relative; }
.notify b { position: absolute; left: 22px; top: -14px; height: 26px; width: 53px; border-radius: 13px; background: #c3271d; color: #fff; font: 700 18px/26px Inter, sans-serif; text-align: center; letter-spacing: -.3px; }
.tabs-row { height: 57px; background: #eee; border-bottom: 2px solid #d0d0d0; flex: none; display: flex; align-items: stretch; }
.tabs-row span { flex: 1; text-align: center; line-height: 56px; padding-left: 56px; }
.newtab { width: 52px; background: #e0e0e0; border-left: 2px solid #cbcbcb; border-top: 2px solid #d2d2d2; display: grid; place-items: center; color: #777; }

/* Canvas */
.stage { display: flex; flex: 1; min-height: 0; }
.canvas { position: relative; flex: 1; overflow: hidden; background: #f9f9f9; }
.board { position: absolute; top: 46px; }
.b1 { left: 56px; } .b2 { left: 417.500px; } .b3 { left: 1346px; } .b4 { left: 1707.500px; }
.board h2 { height: 41px; line-height: 42px; padding-left: 6px; font-size: 22px; color: #939393; letter-spacing: .15px; white-space: nowrap; }
/* Artboards are laid out in device points and shown at the canvas zoom. */
.art { zoom: .6295; background: #f4f4f4; box-shadow: 0 3px 14px rgba(0,0,0,.26), 0 0 3px rgba(0,0,0,.12); font-size: 16px; color: #000; overflow: hidden; }
.w375 { width: 375px; }
.w1276 { width: 1276px; height: 3200px; }
.w1276.short { height: 1040px; }
.b3 .art { height: 830px; }
.ah { margin: 0 16px; height: 73px; border-bottom: 2px solid #e4e4e4; padding-top: 15px; }
.ah strong { display: block; font: 600 15px/24px Inter, sans-serif; }
.ah small { display: block; font-size: 9.500px; line-height: 24px; color: #8e8e93; letter-spacing: -.1px; }
.art h4 { height: 45px; padding: 14px 0 0 16px; font: 600 9.500px/18px Inter, sans-serif; color: #111; letter-spacing: -.2px; }
.art h4.large { height: 60px; padding-top: 31px; }
.art h4.modal-h { height: 60px; padding-top: 24px; }
.art h4.tool-h { height: 60px; padding-top: 31px; }
.cols { display: flex; gap: 60px; padding: 0 16px; }
.cols.bare { padding-top: 45px; }
.stack { width: 375px; }
.stack h4 { padding-left: 0; }
.col { display: flex; flex-direction: column; gap: 16px; }

.card { height: 88px; background: #fcfcfc; display: flex; flex-direction: column; flex: none; }
.h103 { height: 103px; } .h131 { height: 131px; } .h140 { height: 140px; } .h148 { height: 148px; }
.h180 { height: 180px; } .h188 { height: 188px; } .h196 { height: 196px; }
.st { height: 44px; flex: none; padding-left: 27px; font: 600 14.500px/46px Inter, sans-serif; letter-spacing: -.2px; background: url("data:image/svg+xml,%3Csvg xmlns='http://www.w3.org/2000/svg' width='57' height='10' fill='%23e1e1e1'%3E%3Cpath d='M0 10L15 1v9zM20 3q7.500-5 15 0L27.500 10z'/%3E%3Crect x='39' y='0' width='18' height='10' rx='3'/%3E%3C/svg%3E") no-repeat right 17px top 17px; }
.nav { height: 44px; flex: none; display: flex; align-items: center; justify-content: space-between; padding: 1px 16px 0; color: #0085ff; }
.nav b { font-weight: 600; }
.nav > b, .tt b, .nav .t20 { color: #000; }
.nav .l { flex: 1; display: flex; align-items: center; }
.nav .r { flex: 1; display: flex; align-items: center; justify-content: flex-end; gap: 14px; }
.nav svg { width: 21px; height: 21px; }
.r > .in, .big-t > .in { margin-right: 4px; }
.nav svg.big { width: 24px; height: 24px; margin-right: -4px; }
.nav svg.xx { width: 28px; height: 28px; margin-right: -6px; }
.nav svg.ch { width: 20px; margin: 0 11px 0 -2px; height: 20px; }
.nav svg.bb { width: 20px; height: 20px; margin: 0 3px 0 -5px; }
.bk { width: 28px; height: 28px; border-radius: 50%; background: #f1f1f1; margin: 0 11px 0 -6px; display: flex; align-items: center; padding-left: 4px; }
.nav .bk svg { width: 18px; height: 18px; color: #0085ff; }
.t20 { font-size: 19px; }
.nav b.t20 { font-weight: 700; }
.tt { text-align: center; line-height: 16px; padding-top: 2px; }
.tt b, .tt small { display: block; }
small { font-size: 12px; color: #aeaeb2; }
.tt b { line-height: 17px; }
.av { width: 36px; height: 36px; border-radius: 50%; background: #f4f4f4; flex: none; }
.dots { display: flex; gap: 8px; align-items: center; font-size: 14px; }
.dots i { width: 28px; height: 28px; border-radius: 50%; background: #f4f4f4; }
.pat { width: 36px; height: 36px; border-radius: 5px; background: repeating-linear-gradient(45deg, transparent 0 6px, #dfdfdf 6px 7.500px), repeating-linear-gradient(-45deg, transparent 0 6px, #dfdfdf 6px 7.500px), #eaeaea; box-shadow: inset 0 0 0 1px #e0e0e0; }
.nav .date { font-size: 12.500px; line-height: 15px; color: #aeaeb2; }
.pill { height: 28px; width: 60px; border-radius: 14px; background: #0085ff; color: #fff; font: 500 12.500px/29px Inter, sans-serif; text-align: center; }
.pill.soft { height: 25px; line-height: 25px; background: #f1f1f1; color: #0085ff; margin-left: auto; }
.ix { margin-left: 13px; color: #000; font-size: 15.500px; }
.ts { margin-left: 13px; color: #000; line-height: 18px; font-size: 15px; }
.ts small { display: block; line-height: 16px; }
.search { height: 36px; flex: none; margin: auto 16px 16px; border-radius: 18px; background: #f1f1f1; display: flex; align-items: center; color: #97979b; font-size: 15px; padding: 0 13px 0 12px; line-height: 37px; }
.search svg { width: 17px; height: 17px; margin-right: 9px; }
.search .mic, .nav .search .mic { width: 12px; height: 18px; margin: 0 0 0 auto; }
.nav .search { margin: 0 16px 0 0; flex: 1; }
.nav .search svg { width: 17px; height: 17px; }
.nav.down { padding-top: 9px; }
.seg { height: 28px; flex: none; margin: auto 16px 16px; border-radius: 14px; background: #ebebeb; display: flex; padding: 2px; font: 600 12.500px/25px Inter, sans-serif; color: #000; text-align: center; }
.seg b { flex: 1; font-weight: 600; border-radius: 12px; }
.seg b:first-child { background: #fff; box-shadow: 0 1px 3px rgba(0,0,0,.12); }
.seg.sm { width: 164px; margin: 0; }
.tabs { margin: auto 16px 0; height: 43px; display: flex; gap: 17px; font-size: 14px; line-height: 44px; color: #97979b; }
.tabs b { color: #0085ff; font-weight: 600; box-shadow: inset 0 -2.500px #0085ff; }
.tabs span { font-weight: 500; }
.tabs.line { margin: auto 0 0; padding: 0 16px; border-bottom: 1px solid #ebebeb; }

.lg { height: 132px; }
.lg .nav { height: 38px; padding-top: 0; }
.big-t { height: 46px; flex: none; padding: 0 16px; display: flex; align-items: center; }
.big-t > b { font: 700 30px/46px Inter, sans-serif; letter-spacing: -.3px; }
.big-t > .av:last-child, .big-t .lk, .big-t > .in { margin-left: auto; }
.big-t .lk { color: #0085ff; font-weight: 600; }
.big-t .in { width: 21px; height: 21px; color: #0085ff; }
.xl { height: 191px; }
.xl.more { height: 194px; }
.xl .nav { height: 43px; padding-top: 0; }
.xl .search { margin-bottom: 14px; }
.xl .seg { margin-bottom: 14px; }
.xl.sg { height: 188px; }

.modal { height: 110px; background: #000; color: #fff; position: relative; }
.modal .st { height: 54px; background-image: url("data:image/svg+xml,%3Csvg xmlns='http://www.w3.org/2000/svg' width='57' height='10' fill='%23383838'%3E%3Cpath d='M0 10L15 1v9zM20 3q7.500-5 15 0L27.500 10z'/%3E%3Crect x='39' y='0' width='18' height='10' rx='3'/%3E%3C/svg%3E"); }
.modal::before { content: ""; position: absolute; left: 16px; right: 16px; top: 44px; height: 20px; background: #a5a5a5; border-radius: 10px 10px 0 0; }
.sheet { position: relative; flex: 1; background: #fcfcfc; border-radius: 10px 10px 0 0; display: flex; flex-direction: column; }
.sheet .nav { height: 56px; padding-top: 1px; }
.h162 { height: 162.500px; } .h156 { height: 156px; } .h147 { height: 147px; }
.h162 .search, .h156 .seg { margin-bottom: 14px; }

.bar { position: relative; height: 84px; background: #fcfcfc; flex: none; overflow: hidden; }
.bar::after { content: ""; position: absolute; left: 120px; width: 135px; height: 5px; border-radius: 3px; bottom: 11px; background: #ebebeb; }
.b102 { height: 101.500px; } .b151 { height: 151.500px; } .b89 { height: 89px; }
.bar.blue { height: 82px; background: #0085ff; color: #fff; text-align: center; line-height: 52px; padding-left: 5px; font-size: 15.500px; font-weight: 500; }
.bar.blue::after { background: #66b6ff; bottom: 9px; }
.bar.flat { height: 77px; background: #f6f6f6; }
.bar.flat::after { background: #e6e6e6; }
.bar.first { margin-top: 167px; }
.b3 .bar.flat { height: 79px; border-top: 2px solid #ececec; background: #f7f7f7; }
.tb { display: flex; padding-top: 5px; }
.tb span { flex: 1 0 0; font-size: 10.500px; line-height: 12px; font-weight: 500; color: #a1a1a1; display: flex; flex-direction: column; align-items: center; gap: 4px; }
.tb .on { color: #0085ff; }
.tb i { width: 24px; height: 24px; flex: none; border-radius: 50%; background: currentColor; }
.tb svg { width: 24px; height: 24px; }
.btns { margin: 9px 16px 0; height: 48px; display: flex; gap: 10px; color: #0085ff; }
.btns b { flex: 1; font-weight: 600; font-size: 16px; background: #f1f1f1; border-radius: 10px; display: flex; align-items: center; justify-content: center; gap: 8px; }
.btns.joined { gap: 0; }
.btns.joined b:first-child { border-radius: 10px 0 0 10px; border-right: 1px solid #e6e6e6; }
.btns.joined b:last-child { border-radius: 0 10px 10px 0; }
.btns svg { width: 19px; height: 19px; }
.b151 .tb { padding-top: 14px; }
.chips { display: flex; gap: 8px; padding: 10px 0 0 16px; }
.chips i { width: 70px; height: 36px; border-radius: 18px; background: #f1f1f1; flex: none; display: grid; place-items: center; color: #a1a1a1; }
.chips .on { color: #0085ff; }
.chips svg { width: 20px; height: 18px; }
.tools3 { display: flex; justify-content: space-between; align-items: center; padding: 0 16px; height: 45px; color: #0085ff; }
.tools3 svg { width: 22px; height: 22px; }
.tools3 .sun { width: 25px; height: 25px; }

/* Inspector */
.inspector { width: 476px; border-left: 2px solid #e4e4e4; background: #fff; }
.align { display: flex; align-items: center; height: 26px; margin: 23px 20px 0 24px; gap: 28px; }
.align svg { width: 26px; height: 26px; fill: #f0f0f0; stroke: #bcbcbc; stroke-width: 2; }
.align .dots3 { width: 6px; margin: 0 -5px 0 -4px; }
.fields { display: grid; grid-template-columns: repeat(3, 126px); gap: 20px 30px; padding: 24px 0 20px 20px; border-bottom: 2px solid #e6e6e6; height: 150px; }
.fields > span, .flip { height: 42px; border-radius: 9px; background: #f5f5f5; color: #d0d0d0; font-size: 19px; font-weight: 600; display: flex; align-items: center; justify-content: flex-end; padding-right: 10px; }
.fields .deg { padding: 0 11px 6px 0; }
.fields div { display: flex; gap: 10px; }
.fields .flip { width: 58px; padding: 0; justify-content: center; }
.flip svg { fill: #e6e6e6; stroke: #b8b8b8; stroke-width: 2; }
.style-h, .prop { margin-left: 20px; height: 64px; border-bottom: 2px solid #e9e9e9; display: flex; align-items: center; justify-content: space-between; padding: 0 22px 1px 0; }
.style-h { font-weight: 600; font-size: 20px; color: #808080; padding-right: 24px; }
.sc { width: 19px; height: 11px; color: #777; }
.prop { font-weight: 600; font-size: 22px; color: #262626; letter-spacing: .1px; }
.prop svg { width: 22px; height: 22px; color: #b5b5b5; }
.prop.last { margin-left: 0; padding-left: 20px; border-color: #e6e6e6; }
```
